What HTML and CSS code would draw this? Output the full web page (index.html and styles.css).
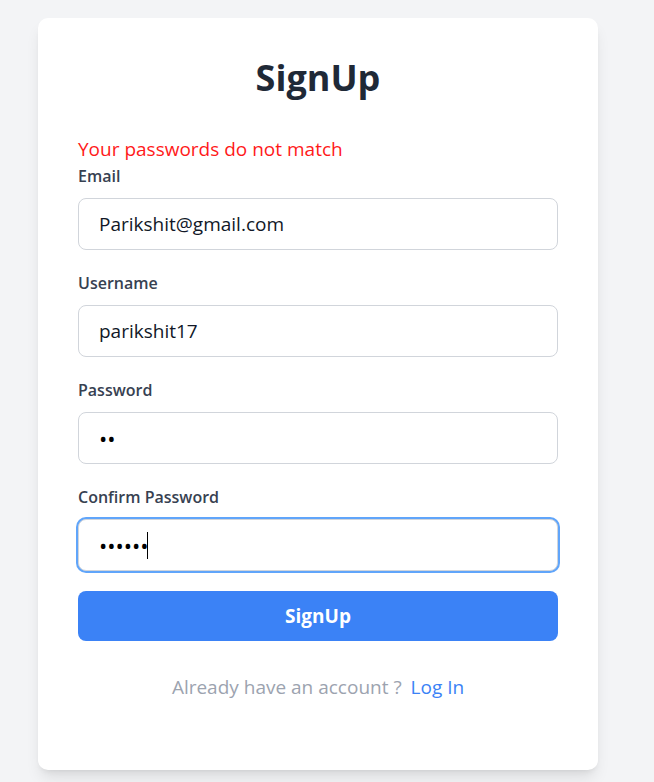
FILE: index.html
```html
<!DOCTYPE html>
<html lang="en">
<head>
<meta charset="utf-8">
<title>SignUp</title>
<link rel="stylesheet" href="styles.css">
</head>
<body>
<div class="page">
  <form class="card">
    <h1 class="title">SignUp</h1>
    <p class="error">Your passwords do not match</p>
    <div class="field">
      <label class="label" for="email">Email</label>
      <input class="input" id="email" type="email" value="Parikshit@gmail.com">
    </div>
    <div class="field">
      <label class="label" for="username">Username</label>
      <input class="input" id="username" type="text" value="parikshit17">
    </div>
    <div class="field">
      <label class="label" for="password">Password</label>
      <input class="input" id="password" type="password" value="ab">
    </div>
    <div class="field field-last">
      <label class="label" for="confirm">Confirm Password</label>
      <div class="input-wrap">
        <input class="input input-focus" id="confirm" type="password" value="abcdef">
        <span class="caret"></span>
      </div>
    </div>
    <button class="btn" type="button">SignUp</button>
    <p class="footer">Already have an account ? <a class="link" href="#">Log In</a></p>
  </form>
</div>
</body>
</html>
```
FILE: styles.css
```css
* { box-sizing: border-box; }
html, body { margin: 0; padding: 0; }
body {
  background: #f3f4f6;
  font-family: "Open Sans", "Noto Sans", sans-serif;
  height: 782px;
  overflow: hidden;
}
.page {
  width: 636px;
  display: flex;
  justify-content: center;
  padding-top: 18px;
}
.card {
  width: 560px;
  background: #fff;
  border-radius: 10px;
  padding: 40px 40px 69px;
  box-shadow: 0 10px 15px -3px rgba(0,0,0,0.1), 0 4px 6px -4px rgba(0,0,0,0.1);
  display: flex;
  flex-direction: column;
}
.title {
  margin: 0 0 37px;
  text-align: center;
  font-size: 36px;
  line-height: 40px;
  font-weight: 700;
  color: #1f2937;
}
.error {
  margin: 0 0 1px;
  color: #ff1a1a;
  font-size: 19px;
  line-height: 28px;
}
.field {
  display: flex;
  flex-direction: column;
  margin-bottom: 21px;
}
.field-last { margin-bottom: 20px; }
.label {
  font-size: 16px;
  line-height: 24px;
  font-weight: 600;
  color: #374151;
  margin-bottom: 10px;
}
.input-wrap { position: relative; }
.input {
  width: 100%;
  height: 52px;
  border: 1px solid #d1d5db;
  border-radius: 8px;
  padding: 0 20px;
  font-family: inherit;
  font-size: 19px;
  color: #111827;
  background: #fff;
  outline: none;
}
.input[type="password"] { font-size: 22px; color: #000; }
.input-focus {
  box-shadow: 0 0 0 2px #60a5fa;
}
.caret {
  position: absolute;
  left: 69px;
  top: 13px;
  width: 1px;
  height: 27px;
  background: #000;
}
.btn {
  height: 50px;
  border: none;
  border-radius: 8px;
  background: #3b82f6;
  color: #fff;
  font-family: inherit;
  font-size: 19px;
  font-weight: 700;
}
.footer {
  margin: 32px 0 0;
  text-align: center;
  font-size: 19px;
  line-height: 28px;
  color: #9ca3af;
}
.link {
  color: #3b82f6;
  text-decoration: none;
  margin-left: 4px;
}
```
